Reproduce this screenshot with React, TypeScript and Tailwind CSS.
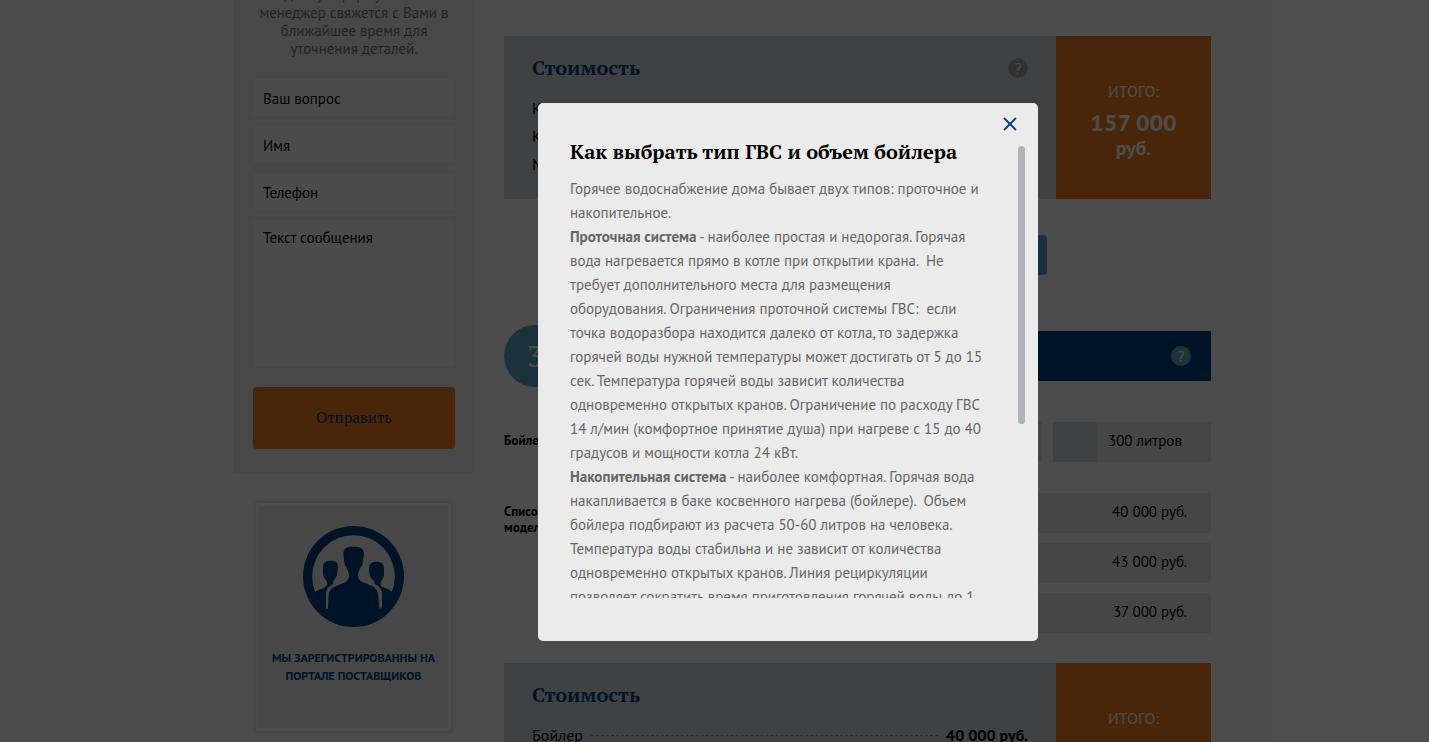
import { X } from "lucide-react";

const sans = "font-['PT_Sans','Noto_Sans',sans-serif]";
const serif = "font-['PT_Serif','Liberation_Serif',serif]";

const flowing = [
  "наиболее простая и недорогая. Горячая",
  "вода нагревается прямо в котле при открытии крана.\u00a0 Не",
  "требует дополнительного места для размещения",
  "оборудования. Ограничения проточной системы ГВС:\u00a0 если",
  "точка водоразбора находится далеко от котла, то задержка",
  "горячей воды нужной температуры может достигать от 5 до 15",
  "сек. Температура горячей воды зависит количества",
  "одновременно открытых кранов. Ограничение по расходу ГВС",
  "14 л/мин (комфортное принятие душа) при нагреве с 15 до 40",
  "градусов и мощности котла 24 кВт.",
];

const storage = [
  "наиболее комфортная. Горячая вода",
  "накапливается в баке косвенного нагрева (бойлере).\u00a0 Объем",
  "бойлера подбирают из расчета 50-60 литров на человека.",
  "Температура воды стабильна и не зависит от количества",
  "одновременно открытых кранов. Линия рециркуляции",
  "позволяет сократить время приготовления горячей воды до 1",
];

function Lines({ title, lines }: { title: string; lines: string[] }) {
  return (
    <p>
      <strong>{title}</strong> -{" "}
      {lines.map((line) => (
        <span key={line}>
          {line}
          <br />
        </span>
      ))}
    </p>
  );
}

function Help({ className }: { className: string }) {
  return (
    <button
      type="button"
      aria-label="Подсказка"
      className={`flex size-5 items-center justify-center rounded-full text-base leading-5 text-white ${className}`}
    >
      ?
    </button>
  );
}

function Cost({ rows, total, help = false }: { rows: [string, string][]; total: string; help?: boolean }) {
  return (
    <section className="flex h-[163px] bg-[#d5dbe0]">
      <div className="flex-1 pt-[18px] pr-7 pl-7">
        <div className="flex items-center justify-between">
          <h2 className={`${serif} text-xl leading-7 font-bold text-[#004385]`}>Стоимость</h2>
          {help && <Help className="bg-[#a6a6a6]" />}
        </div>
        <ul className="mt-3 text-base leading-7">
          {rows.map(([name, price]) => (
            <li key={name} className="flex items-center gap-2">
              <span>{name}</span>
              <span className="flex-1 border-t border-dashed border-[#8b8f93]" />
              <b>{price}</b>
            </li>
          ))}
        </ul>
      </div>
      <div className="w-[155px] bg-[#f57f1e] pt-[43px] text-center text-white">
        <div className="text-base leading-6">ИТОГО:</div>
        <div className="mt-1 text-2xl leading-8 font-bold">{total}</div>
        <div className="text-xl leading-[18px] font-bold">руб.</div>
      </div>
    </section>
  );
}

function PeopleIcon() {
  return (
    <svg viewBox="189 123 303 303" className="mx-auto size-[101px]" aria-hidden="true">
      <clipPath id="people-disc">
        <circle cx="340.5" cy="274.5" r="140" />
      </clipPath>
      <circle cx="340.5" cy="274.5" r="151.5" fill="#004385" />
      <circle cx="340.5" cy="274.5" r="124" fill="#eeeeee" />
      <g fill="#004385" clipPath="url(#people-disc)">
        <path d="M340 185C320 185 310 190 310 207L313 235C316 247 327 257 327 270C327 286 318 292 303 297L281 306C270 312 267 320 265 335L263 400H424L416 335C415 319 411 310 397 303L374 294C361 289 354 284 354 271C354 258 364 247 368 236L372 207C372 190 360 185 340 185Z" />
        <path d="M272 227C257 227 249 233 249 246V266C250 279 261 286 262 297C261 308 243 311 225 321C205 341 225 390 258 395V330C258 316 265 306 280 297C276 292 285 283 290 274L294 249C294 234 290 227 272 227Z" />
        <path d="M409 230C425 230 432 236 432 249V269C431 282 421 288 421 299C424 309 440 306 457 321C477 343 460 390 426 395V330C426 315 420 304 403 297C408 290 395 285 390 274L387 256C387 239 391 230 409 230Z" />
        <path d="M230 360L258 372H425L450 360C430 400 394 412 340 412C286 412 251 400 230 360Z" />
      </g>
      <path d="M281 297C262 306 258 315 258 334V372H263L265 334C267 317 270 311 282 306Z" fill="#eeeeee" />
      <path d="M396 294C419 304 426 314 426 334V366L418 372L415 334C413 315 409 309 395 302Z" fill="#eeeeee" />
    </svg>
  );
}

const field =
  "block w-full rounded-sm bg-[#fbfbfb] px-2.5 text-[15px] text-black placeholder:text-black placeholder:opacity-100";

function Sidebar() {
  return (
    <aside className="w-[241px] shrink-0">
      <form className="-mt-3.5 bg-[#f0f0f0] pr-[19px] pb-6 pl-5">
        <p className="mb-[21px] text-center text-[15px] leading-[18px] text-[#777]">
          данную форму и наш
          <br />
          менеджер свяжется с Вами в
          <br />
          ближайшее время для
          <br />
          уточнения деталей.
        </p>
        <div className="flex flex-col gap-2.5">
          <input aria-label="Ваш вопрос" placeholder="Ваш вопрос" className={`${field} h-[37px] pt-0.5`} />
          <input aria-label="Имя" placeholder="Имя" className={`${field} h-[37px] pt-0.5`} />
          <input aria-label="Телефон" placeholder="Телефон" className={`${field} h-[37px] pt-0.5`} />
          <textarea
            aria-label="Текст сообщения"
            placeholder="Текст сообщения"
            className={`${field} h-[147px] resize-none pt-[7px]`}
          />
        </div>
        <button
          type="button"
          className={`${serif} mt-5 h-[62px] w-full rounded-sm bg-[#f57f1e] pb-0.5 text-[15px] text-[#003a75]`}
        >
          Отправить
        </button>
      </form>
      <div className="mx-[23px] mt-[30px] h-[228px] border-3 border-white bg-[#eeeeee] pt-5 text-center shadow-[0_0_6px_rgba(0,0,0,0.2)]">
        <PeopleIcon />
        <p className="mt-[22px] text-xs leading-[18px] font-bold text-[#004385]">
          МЫ ЗАРЕГИСТРИРОВАННЫ НА
          <br />
          ПОРТАЛЕ ПОСТАВЩИКОВ
        </p>
      </div>
    </aside>
  );
}

export default function App() {
  return (
    <div className={`${sans} relative h-screen overflow-hidden bg-white text-black`}>
      <div className="pl-[15px]">
        <div className="mx-auto flex max-w-[978px] gap-[30px]">
          <Sidebar />
          <main className="min-w-0 flex-1 pt-9">
            <Cost
              help
              rows={[
                ["Котел", "120 000 руб."],
                ["Комплектующие", "25 000 руб."],
                ["Монтаж", "12 000 руб."],
              ]}
              total="157 000"
            />
            <button
              type="button"
              className="mx-auto mt-9 block h-10 w-[379px] rounded-sm bg-[#559dc1]"
              aria-label="Далее"
            />
            <div className="mt-[50px] flex items-center">
              <div
                className={`${serif} z-10 flex size-[62px] items-center justify-center rounded-full bg-[#5aa8cc] text-[30px] text-white`}
              >
                3
              </div>
              <div className="-ml-8 flex h-[50px] flex-1 items-center justify-end bg-[#004385] pr-5">
                <Help className="bg-[#6cabc3]" />
              </div>
            </div>
            <div className="mt-[35px] flex items-center justify-between">
              <div className="pb-0.5 text-[13px] leading-4 font-bold">Бойлер</div>
              <div className="flex gap-[11px] text-[15px]">
                <div className="flex h-10 w-[158px] bg-[#eaeaea]">
                  <span className="w-11 bg-[#d5dbe0]" />
                </div>
                <label className="flex h-10 w-[158px] items-center bg-[#eaeaea]">
                  <span className="h-full w-11 bg-[#d5dbe0]" />
                  <span className="pb-0.5 pl-[11px]">300 литров</span>
                </label>
              </div>
            </div>
            <div className="mt-[31px] flex">
              <div className="w-[130px] pt-[11px] text-[13px] leading-4 font-bold">
                Список
                <br />
                моделей
              </div>
              <div className="flex flex-1 flex-col gap-2.5 text-[15px]">
                {["40 000 руб.", "43 000 руб.", "37 000 руб."].map((price) => (
                  <div key={price} className="flex h-10 items-center justify-end bg-[#eaeaea] pr-6 pb-0.5">
                    {price}
                  </div>
                ))}
              </div>
            </div>
            <div className="mt-[30px]">
              <Cost rows={[["Бойлер", "40 000 руб."]]} total="40 000" />
            </div>
          </main>
        </div>
      </div>

      <div className="absolute inset-0 z-20 flex items-start justify-center bg-black/70 pt-[103px] pl-[147px]">
        <section
          role="dialog"
          aria-modal="true"
          aria-labelledby="dialog-title"
          className="w-[500px] rounded-[5px] bg-[#ebebeb] pb-[43px]"
        >
          <div className="flex justify-end pt-2.5 pr-[17px]">
            <button type="button" aria-label="Закрыть" className="text-[#004385]">
              <X className="size-[22px]" strokeWidth={2} />
            </button>
          </div>
          <div className="flex h-[463px] pr-[13px] pl-8">
            <div className="flex-1 overflow-hidden whitespace-nowrap">
              <h1 id="dialog-title" className={`${serif} pt-1 text-xl leading-[26px] font-bold`}>
                Как выбрать тип ГВС и объем бойлера
              </h1>
              <div className="mt-3 text-[15px] leading-6 text-[#666]">
                <p>
                  Горячее водоснабжение дома бывает двух типов: проточное и
                  <br />
                  накопительное.
                </p>
                <Lines title="Проточная система" lines={flowing} />
                <Lines title="Накопительная система" lines={storage} />
              </div>
            </div>
            <div className="mt-[11px] h-[278px] w-[7px] rounded-full bg-[#afb4ba]" />
          </div>
        </section>
      </div>
    </div>
  );
}
